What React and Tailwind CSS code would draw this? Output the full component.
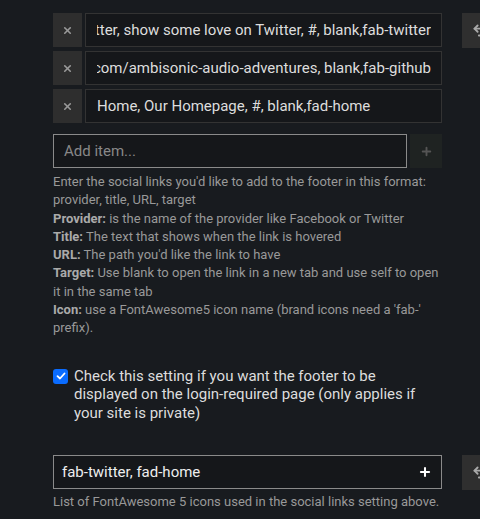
import { Plus, X, Undo2 } from "lucide-react";

const LINKS = [
  { text: "Twitter, show some love on Twitter, #, blank,fab-twitter", scrolled: true },
  { text: "GitHub, Find us on GitHub, https://github.com/ambisonic-audio-adventures, blank,fab-github", scrolled: true },
  { text: "Home, Our Homepage, #, blank,fad-home", scrolled: false },
];

const RevertButton = () => (
  <button className="ml-[20px] flex h-[35px] w-[34px] shrink-0 items-center justify-center bg-[#2f2f2f] text-[#aaa]">
    <Undo2 size={15} strokeWidth={3} />
  </button>
);

const App = () => {
  return (
    <div
      className="min-h-[519px] w-[480px] overflow-hidden bg-[#181b1f] pl-[53px] pt-[13px]"
      style={{ fontFamily: "Roboto, 'Liberation Sans', sans-serif" }}
    >
      <div className="flex">
        <div className="w-[389px] shrink-0">
          <div className="flex flex-col gap-[4px]">
            {LINKS.map((link) => (
              <div key={link.text} className="flex h-[34px] gap-[3px]">
                <button className="flex w-[29px] shrink-0 items-center justify-center bg-[#2e2e2e] text-[#999]">
                  <X size={11} strokeWidth={3.5} />
                </button>
                <div className="flex min-w-0 flex-1 items-center border border-[#333] bg-[#15171a] pl-[11px] pr-[10px]">
                  <div
                    className={`flex min-w-0 flex-1 overflow-hidden whitespace-nowrap text-[15px] text-[#ddd] ${
                      link.scrolled ? "justify-end" : "justify-start"
                    }`}
                  >
                    <span>{link.text}</span>
                  </div>
                </div>
              </div>
            ))}
          </div>

          <div className="mt-[11px] flex h-[34px] gap-[3px]">
            <div className="flex flex-1 items-center border border-[#8a8a8a] bg-[#15171a] px-[10px] text-[15px] text-[#888]">
              Add item...
            </div>
            <button className="flex w-[32px] shrink-0 items-center justify-center bg-[#1f2322] text-[#555]">
              <Plus size={13} strokeWidth={3.5} />
            </button>
          </div>

          <div className="mt-[5px] text-[13px] leading-[18.3px] text-[#999]">
            <p>Enter the social links you'd like to add to the footer in this format: provider, title, URL, target</p>
            <p>
              <b className="text-[#aaa]">Provider:</b> is the name of the provider like Facebook or Twitter
            </p>
            <p>
              <b className="text-[#aaa]">Title:</b> The text that shows when the link is hovered
            </p>
            <p>
              <b className="text-[#aaa]">URL:</b> The path you'd like the link to have
            </p>
            <p>
              <b className="text-[#aaa]">Target:</b> Use blank to open the link in a new tab and use self to open it in the same tab
            </p>
            <p>
              <b className="text-[#aaa]">Icon:</b> use a FontAwesome5 icon name (brand icons need a 'fab-' prefix).
            </p>
          </div>
        </div>
        <RevertButton />
      </div>

      <label className="mt-[29px] flex w-[389px] gap-[6px]">
        <span className="mt-[2px] flex h-[15px] w-[15px] shrink-0 items-center justify-center rounded-[3px] bg-[#0a6cff] text-white">
          <svg width="10" height="10" viewBox="0 0 10 10" fill="none">
            <path d="M1.5 5.2 L4 7.5 L8.5 2.5" stroke="white" strokeWidth="1.8" strokeLinecap="round" strokeLinejoin="round" />
          </svg>
        </span>
        <span className="w-[345px] text-[15px] leading-[18.5px] text-[#ddd]">
          Check this setting if you want the footer to be displayed on the login-required page (only applies if your site is private)
        </span>
      </label>

      <div className="mt-[33px] flex">
        <div className="w-[389px] shrink-0">
          <div className="flex h-[34px] items-center justify-between border border-[#8a8a8a] bg-[#15171a] pl-[8px] pr-[9px] text-[15px] text-[#eee]">
            <span>fab-twitter, fad-home</span>
            <Plus size={14} strokeWidth={3.5} className="text-white" />
          </div>
          <p className="mt-[4px] text-[13px] leading-[18px] text-[#999]">
            List of FontAwesome 5 icons used in the social links setting above.
          </p>
        </div>
        <RevertButton />
      </div>
    </div>
  );
};

export default App;
